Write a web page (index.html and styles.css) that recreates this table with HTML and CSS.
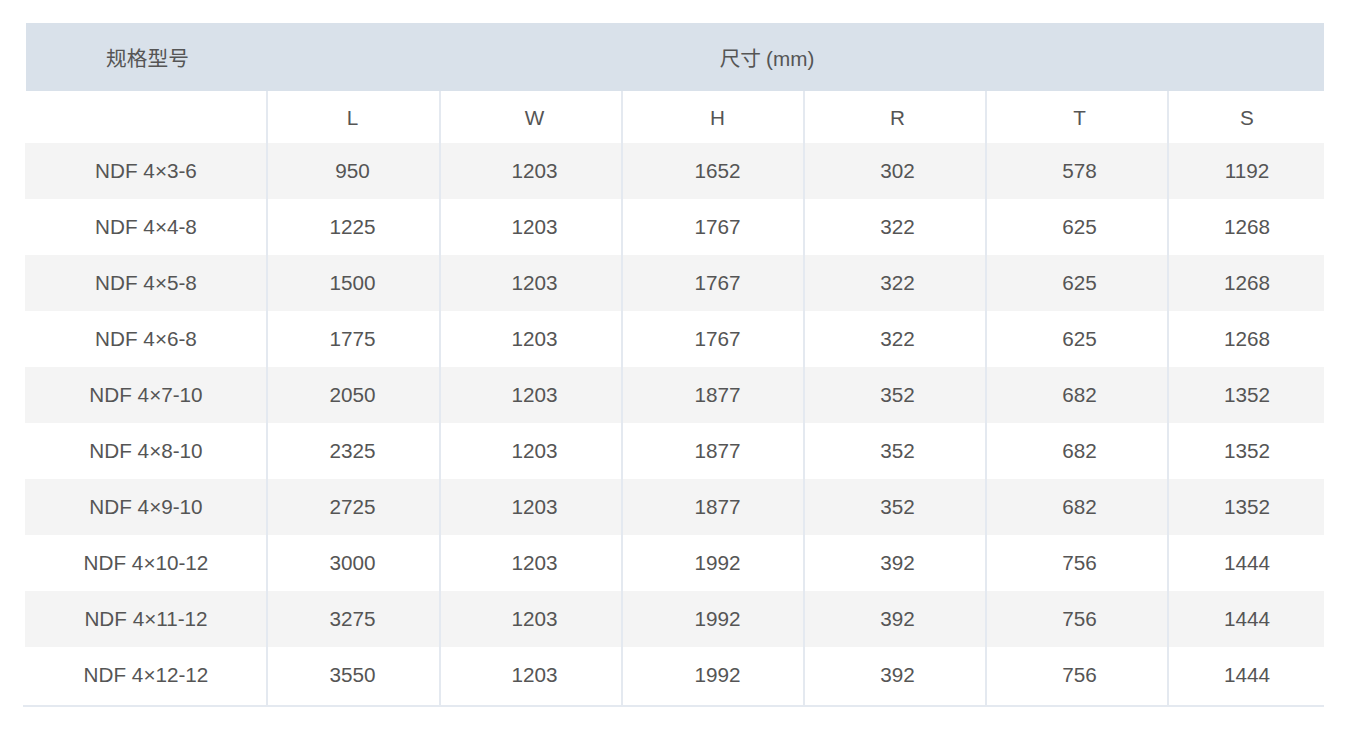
FILE: index.html
```html
<!DOCTYPE html>
<html lang="zh">
<head>
<meta charset="utf-8">
<title>规格型号</title>
<link rel="stylesheet" href="styles.css">
</head>
<body>
<div class="wrap">
  <div class="head">
    <div class="head-name">规格型号</div>
    <div class="head-size"><span class="head-word">尺寸</span>(mm)</div>
  </div>
  <div class="grid">
    <div class="row sub">
      <div class="c"></div><div class="c">L</div><div class="c">W</div><div class="c">H</div><div class="c">R</div><div class="c">T</div><div class="c">S</div>
    </div>
    <div class="row alt"><div class="c">NDF 4×3-6</div><div class="c">950</div><div class="c">1203</div><div class="c">1652</div><div class="c">302</div><div class="c">578</div><div class="c">1192</div></div>
    <div class="row"><div class="c">NDF 4×4-8</div><div class="c">1225</div><div class="c">1203</div><div class="c">1767</div><div class="c">322</div><div class="c">625</div><div class="c">1268</div></div>
    <div class="row alt"><div class="c">NDF 4×5-8</div><div class="c">1500</div><div class="c">1203</div><div class="c">1767</div><div class="c">322</div><div class="c">625</div><div class="c">1268</div></div>
    <div class="row"><div class="c">NDF 4×6-8</div><div class="c">1775</div><div class="c">1203</div><div class="c">1767</div><div class="c">322</div><div class="c">625</div><div class="c">1268</div></div>
    <div class="row alt"><div class="c">NDF 4×7-10</div><div class="c">2050</div><div class="c">1203</div><div class="c">1877</div><div class="c">352</div><div class="c">682</div><div class="c">1352</div></div>
    <div class="row"><div class="c">NDF 4×8-10</div><div class="c">2325</div><div class="c">1203</div><div class="c">1877</div><div class="c">352</div><div class="c">682</div><div class="c">1352</div></div>
    <div class="row alt"><div class="c">NDF 4×9-10</div><div class="c">2725</div><div class="c">1203</div><div class="c">1877</div><div class="c">352</div><div class="c">682</div><div class="c">1352</div></div>
    <div class="row"><div class="c">NDF 4×10-12</div><div class="c">3000</div><div class="c">1203</div><div class="c">1992</div><div class="c">392</div><div class="c">756</div><div class="c">1444</div></div>
    <div class="row alt"><div class="c">NDF 4×11-12</div><div class="c">3275</div><div class="c">1203</div><div class="c">1992</div><div class="c">392</div><div class="c">756</div><div class="c">1444</div></div>
    <div class="row last"><div class="c">NDF 4×12-12</div><div class="c">3550</div><div class="c">1203</div><div class="c">1992</div><div class="c">392</div><div class="c">756</div><div class="c">1444</div></div>
  </div>
  <div class="bottom"></div>
</div>
</body>
</html>
```

FILE: styles.css
```css
html, body {
  margin: 0;
  padding: 0;
  background: #ffffff;
}
body {
  font-family: "Liberation Sans", Arial, "Noto Sans CJK SC", sans-serif;
  font-size: 20.7px;
  color: #555555;
}
.wrap {
  width: 1299px;
  padding: 23px 0 0 25px;
}
.head {
  display: flex;
  height: 68px;
  background: #d9e1ea;
  align-items: center;
  margin-left: 1px;
}
.head-name {
  width: 241px;
  text-align: center;
  padding-left: 1px;
}
.head-size {
  flex: 1;
  text-align: center;
  padding-right: 58px;
}
.head-word {
  margin-right: 5px;
}
.grid {
  display: flex;
  flex-direction: column;
}
.row {
  display: grid;
  grid-template-columns: 242px 173px 182px 182px 182px 182px 156px;
  height: 56px;
}
.row.sub {
  height: 52px;
}
.row.sub .c {
  padding-top: 3px;
}
.row.last {
  height: 58px;
}
.row.last .c {
  padding-bottom: 3px;
}
.row.alt {
  background: #f4f4f4;
}
.c {
  display: flex;
  align-items: center;
  justify-content: center;
  white-space: nowrap;
  padding-bottom: 1px;
}
.c + .c {
  border-left: 2px solid #e4e9f0;
  margin-left: -1px;
}
.c:nth-child(2) {
  padding-right: 3px;
}
.c:nth-child(3) {
  padding-left: 6px;
}
.c:nth-child(4) {
  padding-left: 8px;
}
.c:nth-child(5) {
  padding-left: 4px;
}
.c:nth-child(6) {
  padding-left: 4px;
}
.c:nth-child(7) {
  padding-left: 1px;
}
.bottom {
  height: 2px;
  margin-left: -2px;
  background: #e4e9f0;
}
```
